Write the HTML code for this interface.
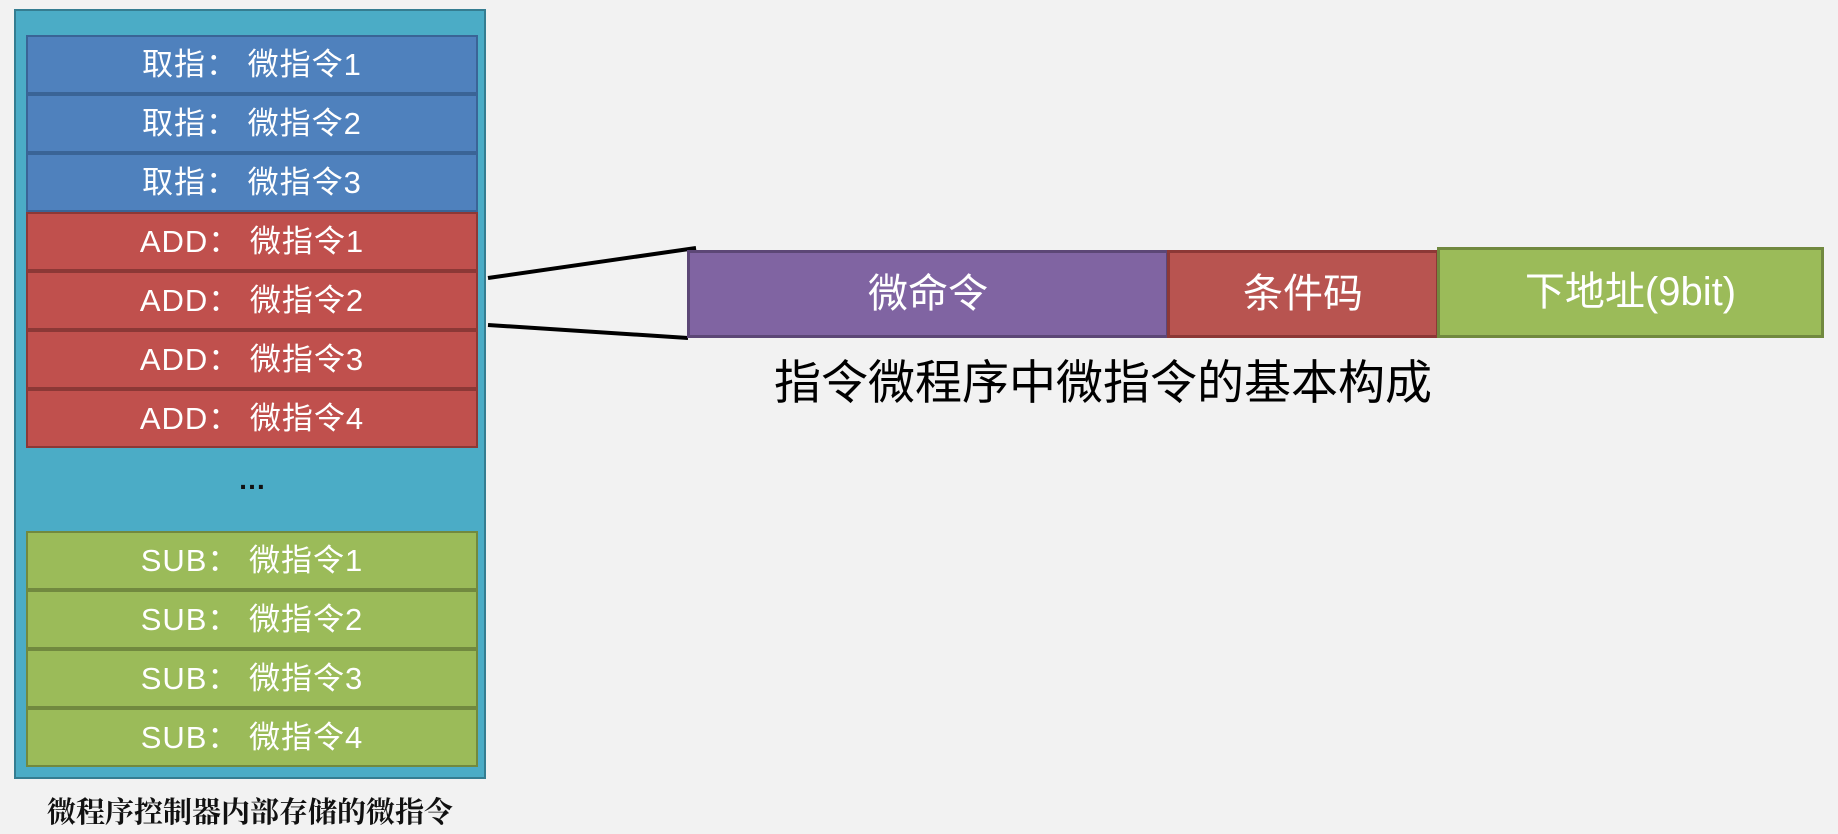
<!DOCTYPE html>
<html><head><meta charset="utf-8"><style>
body{margin:0;width:1838px;height:834px;background:#f2f2f2;position:relative;overflow:hidden;font-family:"Liberation Sans","Noto Sans CJK SC",sans-serif}
.panel{position:absolute;left:14px;top:9px;width:472px;height:770px;background:#4bacc6;border:2px solid #357d91;box-sizing:border-box}
.row{position:absolute;left:26px;width:452px;height:59px;box-sizing:border-box;border:2px solid;color:#fff;font-size:31px;line-height:55px;text-align:center;letter-spacing:1px}
.b{background:#4f81bd;border-color:#3a6496}
.r{background:#c0504d;border-color:#8c3836}
.g{background:#9bbb59;border-color:#71893f}
.box{position:absolute;top:250px;height:88px;box-sizing:border-box;border:3px solid;color:#fff;font-size:40px;text-align:center;line-height:82px}
</style></head><body>
<div class="panel"></div>
<div class="row b" style="top:35px">取指：&nbsp;微指令1</div>
<div class="row b" style="top:94px">取指：&nbsp;微指令2</div>
<div class="row b" style="top:153px">取指：&nbsp;微指令3</div>
<div class="row r" style="top:212px">ADD：&nbsp;微指令1</div>
<div class="row r" style="top:271px">ADD：&nbsp;微指令2</div>
<div class="row r" style="top:330px">ADD：&nbsp;微指令3</div>
<div class="row r" style="top:389px">ADD：&nbsp;微指令4</div>
<div style="position:absolute;left:26px;width:452px;top:464px;text-align:center;font-size:28px;font-weight:bold;color:#111">…</div>
<div class="row g" style="top:531px">SUB：&nbsp;微指令1</div>
<div class="row g" style="top:590px">SUB：&nbsp;微指令2</div>
<div class="row g" style="top:649px">SUB：&nbsp;微指令3</div>
<div class="row g" style="top:708px">SUB：&nbsp;微指令4</div>
<div style="position:absolute;left:14px;width:472px;top:790px;text-align:center;font-family:'Liberation Serif','Noto Serif CJK SC',serif;font-weight:bold;font-size:29px;color:#111">微程序控制器内部存储的微指令</div>
<svg style="position:absolute;left:0;top:0" width="1838" height="834"><line x1="488" y1="278" x2="696" y2="248" stroke="#000" stroke-width="4"/><line x1="488" y1="325" x2="688" y2="338" stroke="#000" stroke-width="4"/></svg>
<div class="box" style="left:687px;width:482px;background:#8064a2;border-color:#5c4776">微命令</div>
<div class="box" style="left:1167px;width:272px;background:#b85450;border-color:#8c3836">条件码</div>
<div class="box" style="left:1437px;width:387px;top:247px;height:91px;background:#9bbb59;border-color:#71893f;line-height:85px">下地址(9bit)</div>
<div style="position:absolute;left:774px;top:344px;font-size:47px;color:#000;white-space:nowrap">指令微程序中微指令的基本构成</div>
</body></html>
